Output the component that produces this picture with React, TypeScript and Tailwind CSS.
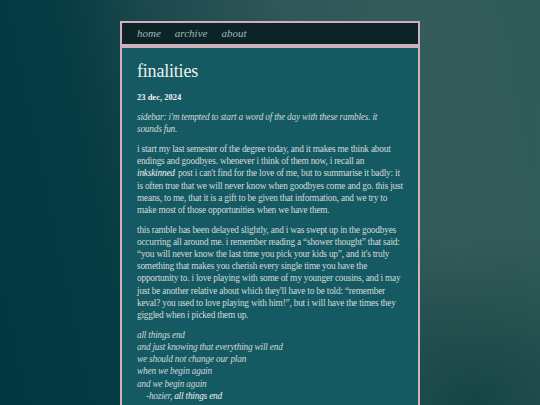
export default function App() {
  const serif = { fontFamily: '"Liberation Serif", "Times New Roman", serif' };
  return (
    <div
      className="h-screen w-full overflow-hidden bg-[radial-gradient(ellipse_at_88%_100%,rgba(18,66,66,0.9)_0%,rgba(18,66,66,0)_30%),linear-gradient(78deg,#02373f_0%,#053b42_22%,#1f4b4f_40%,#2f5658_58%,#355c5a_78%,#2f5b58_100%)]"
      style={serif}
    >
      <div className="mx-auto w-[300px] pt-[21px]">
        <nav className="flex h-[25px] items-center gap-[14px] border-2 border-[#cdb1bd] bg-[#0e2327] pl-[15px] text-[11px] italic text-[#95bdb8]">
          <span>home</span>
          <span>archive</span>
          <span>about</span>
        </nav>
        <main className="border-2 border-t-2 border-[#cdb1bd] bg-[#155a63] px-[15px] pt-[12px] pb-[20px] text-[9.3px] leading-[12.2px] tracking-[-0.2px] text-[#d3dbd9]">
          <h1 className="text-[18px] leading-[22px] tracking-[-0.2px] text-[#eef1ee]">finalities</h1>
          <div className="mt-[9px] text-[8.5px] font-bold leading-[12px] tracking-normal text-[#f1f2f0]">23 dec, 2024</div>
          <p className="mt-[8px] italic text-[#cfd8d6]">
            sidebar: i'm tempted to start a word of the day with these rambles. it sounds fun.
          </p>
          <p className="mt-[7.5px]">
            i start my last semester of the degree today, and it makes me think about endings and goodbyes. whenever i think of them now, i recall an{' '}
            <i className="pr-[1px] text-[#eef2f0]">inkskinned</i> post i can't find for the love of me, but to summarise it badly: it is often true that we will never know when goodbyes come and go. this just means, to me, that it is a gift to be given that information, and we try to make most of those opportunities when we have them.
          </p>
          <p className="mt-[7.5px]">
            this ramble has been delayed slightly, and i was swept up in the goodbyes occurring all around me. i remember reading a “shower thought” that said: “you will never know the last time you pick your kids up”, and it's truly something that makes you cherish every single time you have the opportunity to. i love playing with some of my younger cousins, and i may just be another relative about which they'll have to be told: “remember keval? you used to love playing with him!”, but i will have the times they giggled when i picked them up.
          </p>
          <p className="mt-[7.5px] italic text-[#cfd8d6]">
            all things end
            <br />
            and just knowing that everything will end
            <br />
            we should not change our plan
            <br />
            when we begin again
            <br />
            and we begin again
            <br />
            <span className="pl-[9px]">-hozier, <span className="text-[#eef2f0]">all things end</span></span>
          </p>
        </main>
      </div>
    </div>
  );
}
